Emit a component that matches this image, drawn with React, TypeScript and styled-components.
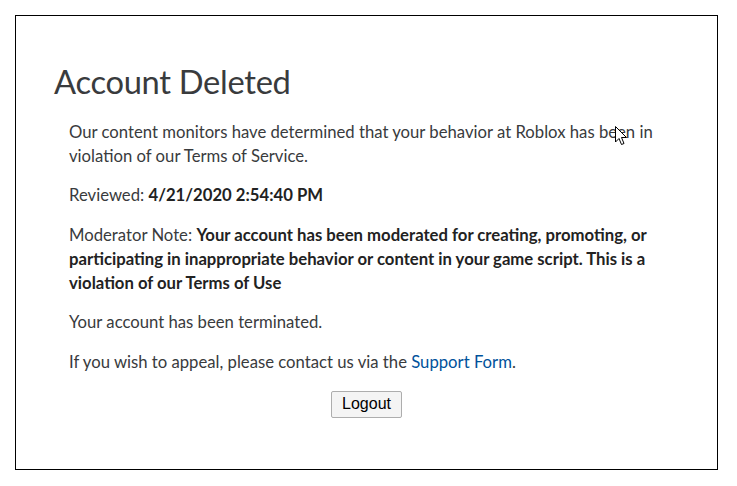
import styled, { createGlobalStyle } from 'styled-components'

const Global = createGlobalStyle`
    body {
        margin: 0;
        background: #fff;
    }
`

const Page = styled.div`
    padding: 15px;
    position: relative;
`

const Panel = styled.div`
    border: 1px solid #000;
    padding: 44px 38px 0 38px;
    box-sizing: border-box;
    width: 703px;
    height: 455px;
    font-family: Lato, "Noto Sans", sans-serif;
    color: #393b3d;
`

const Title = styled.h1`
    margin: 0 0 17px 0;
    font-size: 32.7px;
    font-weight: 400;
    line-height: 44px;
    letter-spacing: -0.3px;
`

const Body = styled.div`
    padding-left: 15px;
    padding-right: 15px;
`

const Para = styled.p`
    margin: 0 0 16px 0;
    font-size: 16.7px;
    line-height: 23.7px;
`

const Strong = styled.b`
    font-weight: 700;
    color: #222;
`

const Link = styled.a`
    color: #00529b;
    text-decoration: none;
`

const Actions = styled.div`
    display: flex;
    justify-content: center;
`

const Button = styled.button`
    font-family: Arial, "Liberation Sans", sans-serif;
    font-size: 16px;
    color: #000;
    background: #f4f4f4;
    border: 1px solid #adadad;
    border-radius: 2px;
    padding: 3px 10px;
    height: 27px;
    width: 71px;
`

const Cursor = styled.svg`
    position: absolute;
    left: 615px;
    top: 126px;
`

export default function App() {
    return (
        <Page>
            <Global />
            <Panel>
                <Title>Account Deleted</Title>
                <Body>
                    <Para>
                        Our content monitors have determined that your behavior at Roblox has been in violation of our Terms of Service.
                    </Para>
                    <Para>
                        Reviewed: <Strong>4/21/2020 2:54:40 PM</Strong>
                    </Para>
                    <Para>
                        Moderator Note: <Strong>Your account has been moderated for creating, promoting, or participating in inappropriate behavior or content in your game script. This is a violation of our Terms of Use</Strong>
                    </Para>
                    <Para>Your account has been terminated.</Para>
                    <Para>
                        If you wish to appeal, please contact us via the <Link href="#">Support Form</Link>.
                    </Para>
                    <Actions>
                        <Button>Logout</Button>
                    </Actions>
                </Body>
            </Panel>
            <Cursor width="13" height="20" viewBox="0 0 13 20">
                <path d="M0.5 0.5 L0.5 16 L4 12.5 L6.5 18.5 L9 17.5 L6.5 11.5 L11.5 11.5 Z" fill="#fff" stroke="#000" strokeWidth="1" />
            </Cursor>
        </Page>
    )
}
